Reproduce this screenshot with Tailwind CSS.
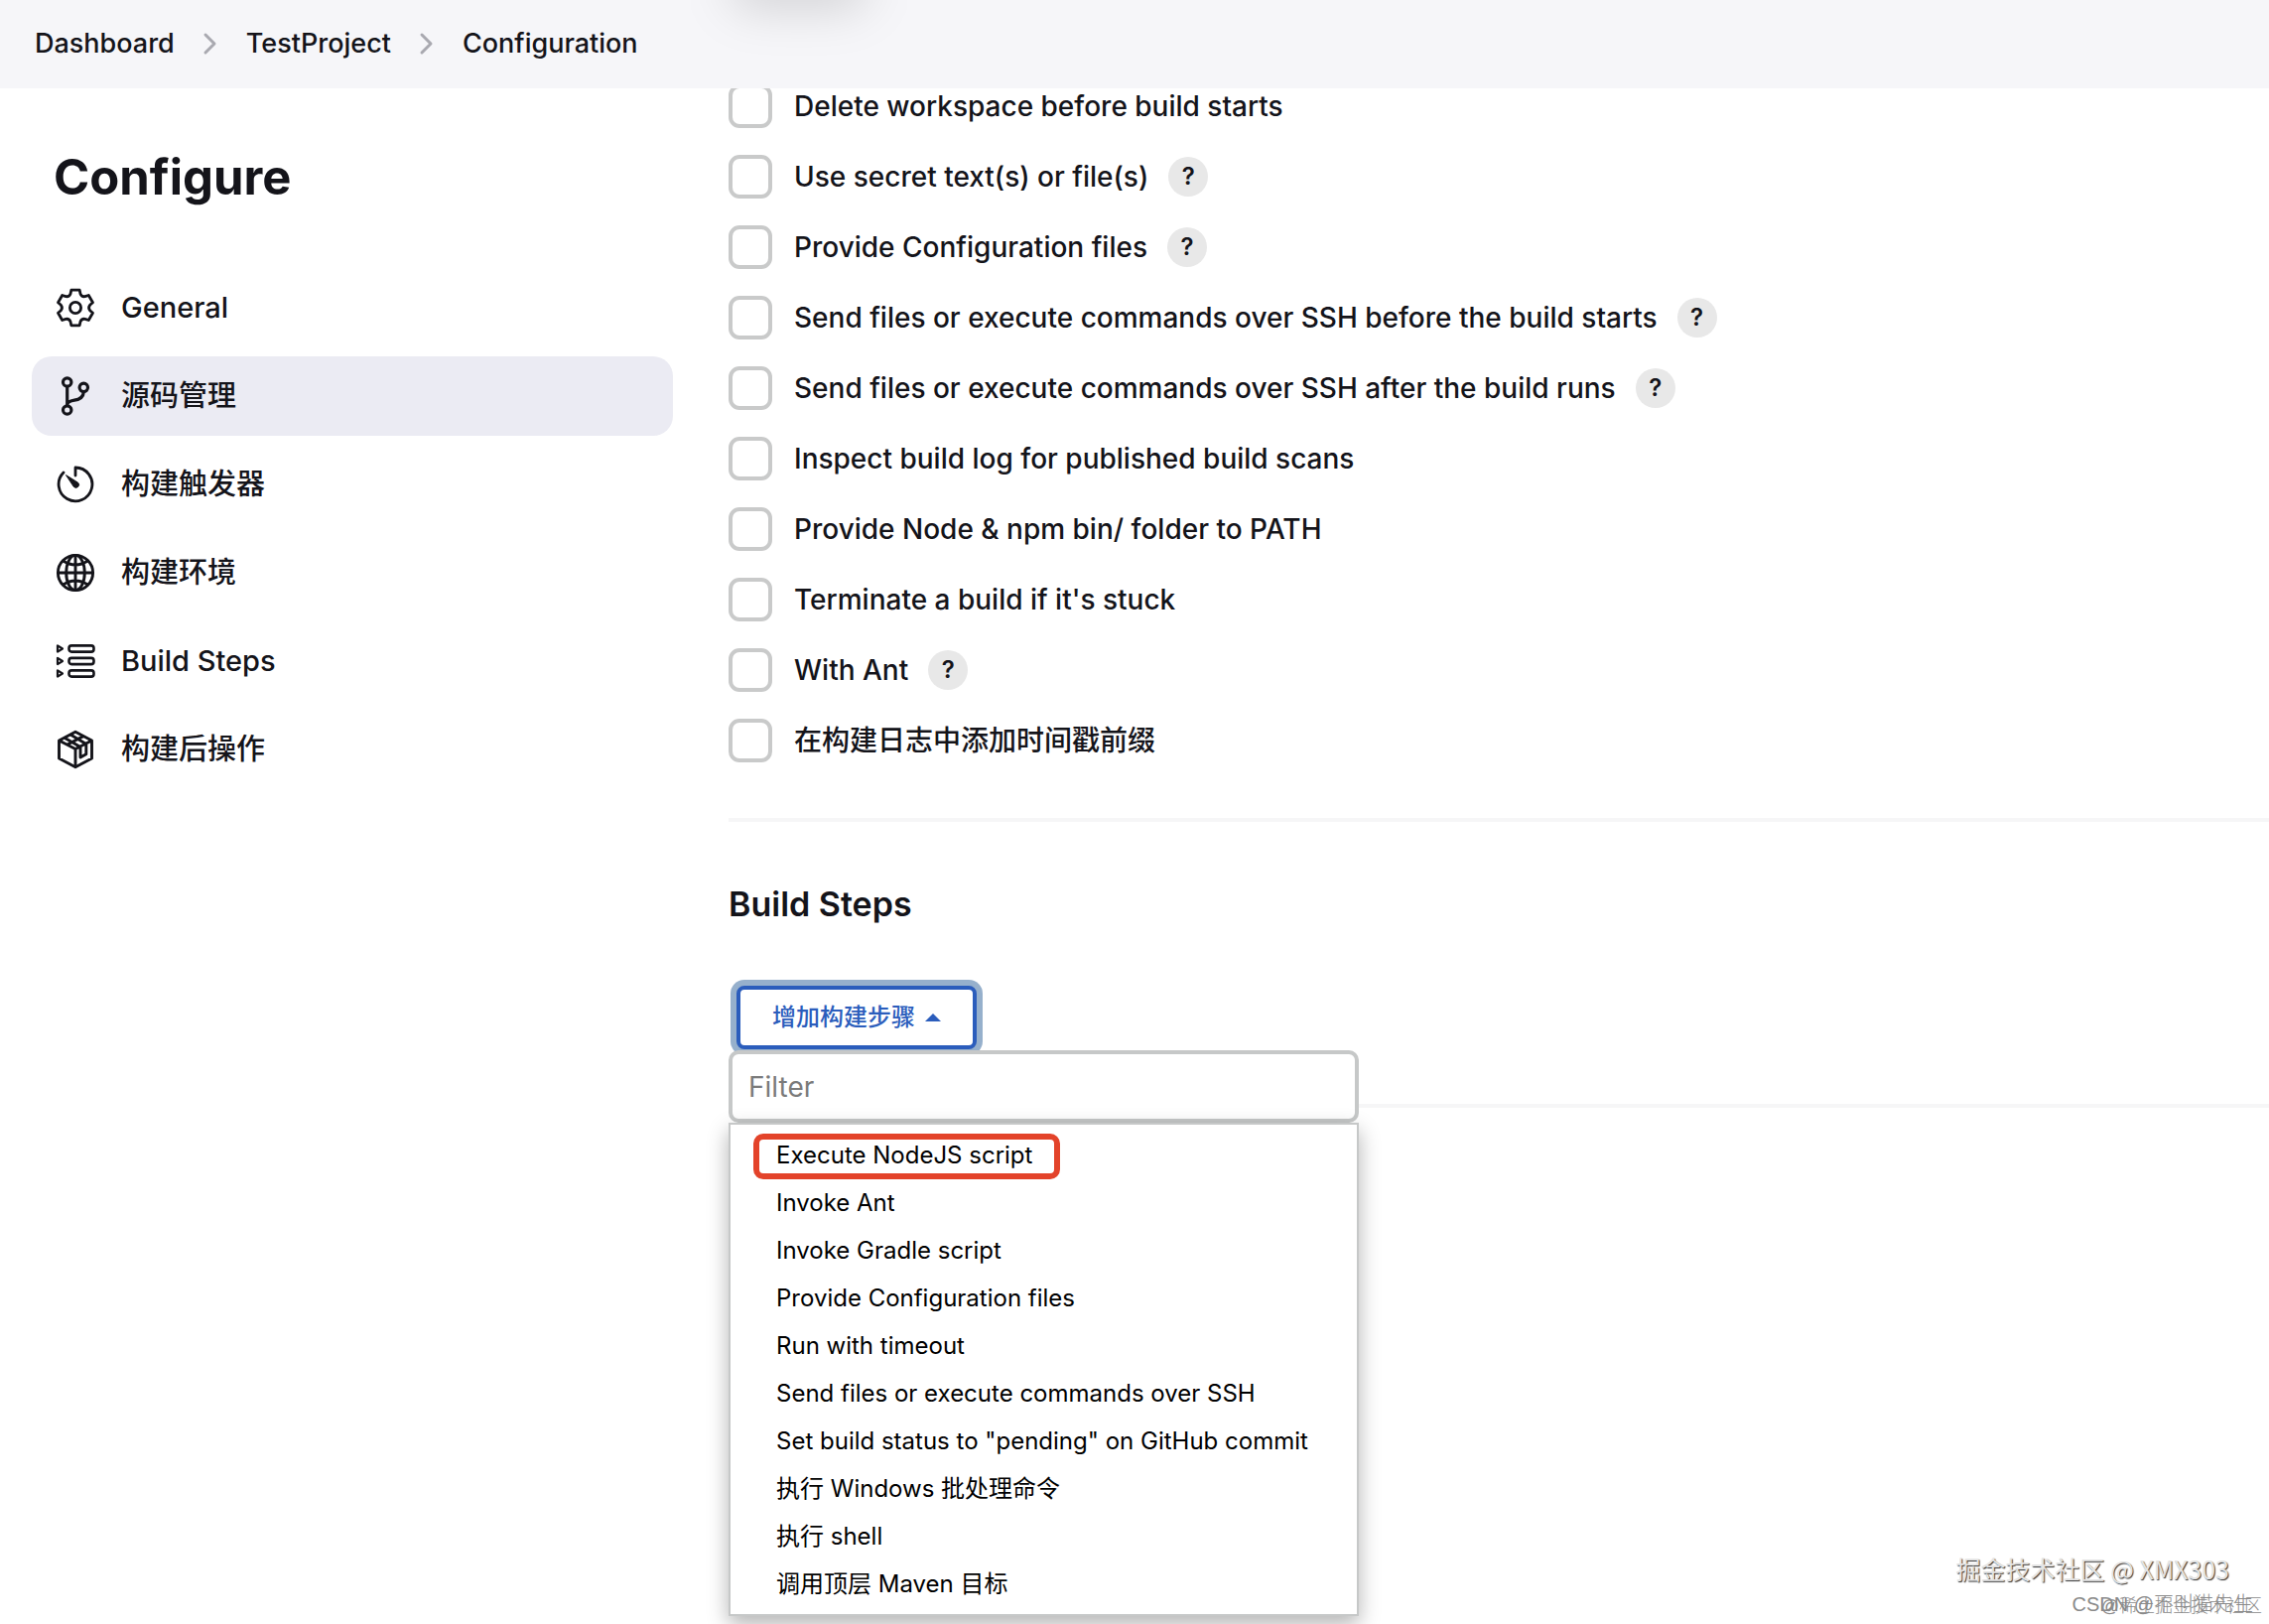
<!DOCTYPE html>
<html lang="zh-CN">
<head>
  <meta charset="UTF-8">
  <title>TestProject Config [Jenkins]</title>
  <meta name="viewport" content="width=device-width, initial-scale=1.0">
  <script src="https://cdn.jsdelivr.net/npm/@tailwindcss/browser@4"></script>
</head>

<body class="relative min-h-screen bg-white text-[#14141a] text-[28px] leading-10 font-medium font-['Inter','Noto_Sans_CJK_SC',sans-serif]">

  <!-- 面包屑 -->
  <header class="relative z-10 h-[89px] overflow-hidden bg-[#f6f6f9] px-[35px] pt-6">
    <div class="absolute left-[735px] -top-10 w-[140px] h-12 rounded-full bg-black/15 blur-xl"></div>
    <nav aria-label="Breadcrumb">
      <ol class="flex items-center gap-7 text-[27px]">
        <li><a href="#">Dashboard</a></li>
        <li aria-hidden="true">
          <svg class="w-4 h-6" viewBox="0 0 16 24" fill="none" stroke="#a9a9b0" stroke-width="3" stroke-linecap="round" stroke-linejoin="round"><path d="M3 3l9 9-9 9"/></svg>
        </li>
        <li><a href="#">TestProject</a></li>
        <li aria-hidden="true">
          <svg class="w-4 h-6" viewBox="0 0 16 24" fill="none" stroke="#a9a9b0" stroke-width="3" stroke-linecap="round" stroke-linejoin="round"><path d="M3 3l9 9-9 9"/></svg>
        </li>
        <li><a href="#">Configuration</a></li>
      </ol>
    </nav>
  </header>

  <div class="flex">
    <!-- 侧边栏 -->
    <aside class="w-[734px] shrink-0 pl-8 pr-14 pt-[59px]">
      <h1 class="pl-[22px] text-[49px] leading-[62px] font-bold">Configure</h1>
      <nav class="mt-[60px] flex flex-col gap-[9px] text-[29px]">
        <a href="#general" class="flex h-20 items-center gap-[26px] rounded-[20px] pl-6">
          <svg class="size-10" viewBox="-20 -20 40 40" fill="none" stroke="currentColor" stroke-width="2.8" stroke-linejoin="round">
            <path d="M-4.2-17.8H4.2L5-14Q6.2-10.8 9.6-11.3L13.3-12.5 17.5-5.3 14.6-2.7Q12.5 0 14.6 2.7L17.5 5.3 13.3 12.5 9.6 11.3Q6.2 10.8 5 14L4.2 17.8H-4.2L-5 14Q-6.2 10.8-9.6 11.3L-13.3 12.5-17.5 5.3-14.6 2.7Q-12.5 0-14.6-2.7L-17.5-5.3-13.3-12.5-9.6-11.3Q-6.2-10.8-5-14Z"/>
            <circle r="5.6"/>
          </svg>
          General
        </a>
        <a href="#scm" class="flex h-20 items-center gap-[26px] rounded-[20px] bg-[#ebebf3] pl-6">
          <svg class="size-10" viewBox="-20 -20 40 40" fill="none" stroke="currentColor" stroke-width="3.2" stroke-linecap="round">
            <circle cx="-8.3" cy="-14" r="4.2"/>
            <circle cx="-8.3" cy="14" r="4.2"/>
            <circle cx="8.3" cy="-8.7" r="4.2"/>
            <path d="M-8.3-9.5V9.5M8.3-4.2C8 1 4 3.4-1 4.2-5 4.9-8.3 6-8.3 9"/>
          </svg>
          源码管理
        </a>
        <a href="#triggers" class="flex h-20 items-center gap-[26px] rounded-[20px] pl-6">
          <svg class="size-10" viewBox="-20 -20 40 40" fill="none" stroke="currentColor" stroke-width="2.8" stroke-linecap="round" stroke-linejoin="round">
            <path d="M0-9V-17A16.9 16.9 0 1 1-12-12"/>
            <path d="M-9.2-9.2L2.6-1.8A2.6 2.6 0 0 1-1.6 2.4Z" fill="currentColor" stroke-width="1"/>
          </svg>
          构建触发器
        </a>
        <a href="#environment" class="flex h-20 items-center gap-[26px] rounded-[20px] pl-6">
          <svg class="size-10" viewBox="-20 -20 40 40" fill="none" stroke="currentColor" stroke-width="2.9">
            <circle r="17.6"/>
            <ellipse rx="9.3" ry="17.6"/>
            <path d="M0-17.7V17.7M-17.7 0H17.7M-12.5-12Q0-4 12.5-12M-12.5 12Q0 4 12.5 12"/>
          </svg>
          构建环境
        </a>
        <a href="#build-steps" class="flex h-20 items-center gap-[26px] rounded-[20px] pl-6">
          <svg class="size-10" viewBox="-20 -20 40 40" fill="none" stroke="currentColor" stroke-width="2.6" stroke-linejoin="round">
            <rect x="-6.5" y="-15.6" width="25" height="6.2" rx="2.6"/>
            <rect x="-6.5" y="-3.1" width="25" height="6.2" rx="2.6"/>
            <rect x="-6.5" y="9.4" width="25" height="6.2" rx="2.6"/>
            <path stroke-width="2.2" d="M-18-15.6V-9.4L-13-12.5ZM-18-3.1V3.1L-13 0ZM-18 9.4V15.6L-13 12.5Z"/>
          </svg>
          Build Steps
        </a>
        <a href="#post-build" class="flex h-20 items-center gap-[26px] rounded-[20px] pl-6">
          <svg class="size-10" viewBox="-20 -20 40 40" fill="none" stroke="currentColor" stroke-width="2.9" stroke-linejoin="round">
            <path d="M0-17.7L16.5-9V9L0 17.7-16.5 9V-9Z"/>
            <path d="M-16.5-9L0-.5 16.5-9M0-.5V17.7M-11.5-12L5-2.6V8L10.8 4.8V-5.6L-5-15M-8.5-4.7L8.5-13.6"/>
          </svg>
          构建后操作
        </a>
      </nav>
    </aside>

    <main class="min-w-0 flex-1">
      <!-- 构建环境选项 -->
      <section id="environment" class="-mt-[18px] border-b-4 border-[#f6f6f7] pb-[43px]">
        <div class="flex h-[71px] items-center gap-5">
          <label class="flex items-center gap-[22px]"><input type="checkbox" class="size-11 appearance-none rounded-[11px] border-4 border-[#c9caca]">Delete workspace before build starts</label>
        </div>
        <div class="flex h-[71px] items-center gap-5">
          <label class="flex items-center gap-[22px]"><input type="checkbox" class="size-11 appearance-none rounded-[11px] border-4 border-[#c9caca]">Use secret text(s) or file(s)</label>
          <button class="size-10 rounded-full bg-[#e8e8e8] text-2xl font-semibold">?</button>
        </div>
        <div class="flex h-[71px] items-center gap-5">
          <label class="flex items-center gap-[22px]"><input type="checkbox" class="size-11 appearance-none rounded-[11px] border-4 border-[#c9caca]">Provide Configuration files</label>
          <button class="size-10 rounded-full bg-[#e8e8e8] text-2xl font-semibold">?</button>
        </div>
        <div class="flex h-[71px] items-center gap-5">
          <label class="flex items-center gap-[22px]"><input type="checkbox" class="size-11 appearance-none rounded-[11px] border-4 border-[#c9caca]">Send files or execute commands over SSH before the build starts</label>
          <button class="size-10 rounded-full bg-[#e8e8e8] text-2xl font-semibold">?</button>
        </div>
        <div class="flex h-[71px] items-center gap-5">
          <label class="flex items-center gap-[22px]"><input type="checkbox" class="size-11 appearance-none rounded-[11px] border-4 border-[#c9caca]">Send files or execute commands over SSH after the build runs</label>
          <button class="size-10 rounded-full bg-[#e8e8e8] text-2xl font-semibold">?</button>
        </div>
        <div class="flex h-[71px] items-center gap-5">
          <label class="flex items-center gap-[22px]"><input type="checkbox" class="size-11 appearance-none rounded-[11px] border-4 border-[#c9caca]">Inspect build log for published build scans</label>
        </div>
        <div class="flex h-[71px] items-center gap-5">
          <label class="flex items-center gap-[22px]"><input type="checkbox" class="size-11 appearance-none rounded-[11px] border-4 border-[#c9caca]">Provide Node &amp; npm bin/ folder to PATH</label>
        </div>
        <div class="flex h-[71px] items-center gap-5">
          <label class="flex items-center gap-[22px]"><input type="checkbox" class="size-11 appearance-none rounded-[11px] border-4 border-[#c9caca]">Terminate a build if it's stuck</label>
        </div>
        <div class="flex h-[71px] items-center gap-5">
          <label class="flex items-center gap-[22px]"><input type="checkbox" class="size-11 appearance-none rounded-[11px] border-4 border-[#c9caca]">With Ant</label>
          <button class="size-10 rounded-full bg-[#e8e8e8] text-2xl font-semibold">?</button>
        </div>
        <div class="flex h-[71px] items-center gap-5">
          <label class="flex items-center gap-[22px]"><input type="checkbox" class="size-11 appearance-none rounded-[11px] border-4 border-[#c9caca]">在构建日志中添加时间戳前缀</label>
        </div>
      </section>

      <!-- Build Steps -->
      <section id="build-steps" class="border-b-4 border-[#f6f6f7] pt-[59px] pb-[55px]">
        <h2 class="text-[34px] leading-[48px] font-semibold">Build Steps</h2>
        <div class="relative mt-[58px]">
          <button class="ml-2 flex h-16 items-center gap-[10px] rounded-lg border-4 border-[#2b5dbc] bg-white px-8 text-2xl text-[#2b5dbc] ring-6 ring-[#96b0cc]">
            增加构建步骤
            <svg class="w-4 h-2" viewBox="0 0 16 8" fill="currentColor"><path d="M0 8L8 0l8 8z"/></svg>
          </button>

          <!-- 下拉菜单 -->
          <div class="absolute left-0 top-[65px] z-10 w-[635px] font-normal text-black">
            <input type="text" placeholder="Filter" aria-label="Filter" class="block h-[73px] w-full rounded-[10px] border-4 border-[#c6c8c8] bg-white px-4 placeholder-[#7b7b7b]">
            <ul class="border-2 border-[#c6c8c8] bg-white pt-[7px] pb-[6px] text-2xl shadow-[0_8px_20px_rgba(0,0,0,0.3)]">
              <li class="relative flex h-12 items-center px-[46px]">
                <a href="#">Execute NodeJS script</a>
                <span class="absolute left-[23px] top-[2px] h-[46px] w-[309px] rounded-[10px] border-6 border-[#e3432a]"></span>
              </li>
              <li class="flex h-12 items-center px-[46px]"><a href="#">Invoke Ant</a></li>
              <li class="flex h-12 items-center px-[46px]"><a href="#">Invoke Gradle script</a></li>
              <li class="flex h-12 items-center px-[46px]"><a href="#">Provide Configuration files</a></li>
              <li class="flex h-12 items-center px-[46px]"><a href="#">Run with timeout</a></li>
              <li class="flex h-12 items-center px-[46px]"><a href="#">Send files or execute commands over SSH</a></li>
              <li class="flex h-12 items-center px-[46px]"><a href="#">Set build status to "pending" on GitHub commit</a></li>
              <li class="flex h-12 items-center px-[46px]"><a href="#">执行 Windows 批处理命令</a></li>
              <li class="flex h-12 items-center px-[46px]"><a href="#">执行 shell</a></li>
              <li class="flex h-12 items-center px-[46px]"><a href="#">调用顶层 Maven 目标</a></li>
            </ul>
          </div>
        </div>
      </section>
    </main>
  </div>

  <!-- 水印 -->
  <div class="absolute right-10 bottom-[38px] text-[25px] leading-9 font-normal text-[#e4e4e4] font-['Noto_Sans_CJK_SC',sans-serif] [text-shadow:1px_1px_1px_#333]">掘金技术社区 @ XMX303</div>
  <div class="absolute right-4 bottom-[6px] text-[20px] leading-7 font-light text-[#8a8a8a] font-['Liberation_Sans','Noto_Sans_CJK_SC',sans-serif]">CSDN @不叫猫先生</div>
  <div class="absolute right-[7px] bottom-1 text-[18px] leading-7 font-light text-[#8a8a8a] font-['Liberation_Sans','Noto_Sans_CJK_SC',sans-serif]">@稀土掘金技术社区</div>
</body>
</html>
